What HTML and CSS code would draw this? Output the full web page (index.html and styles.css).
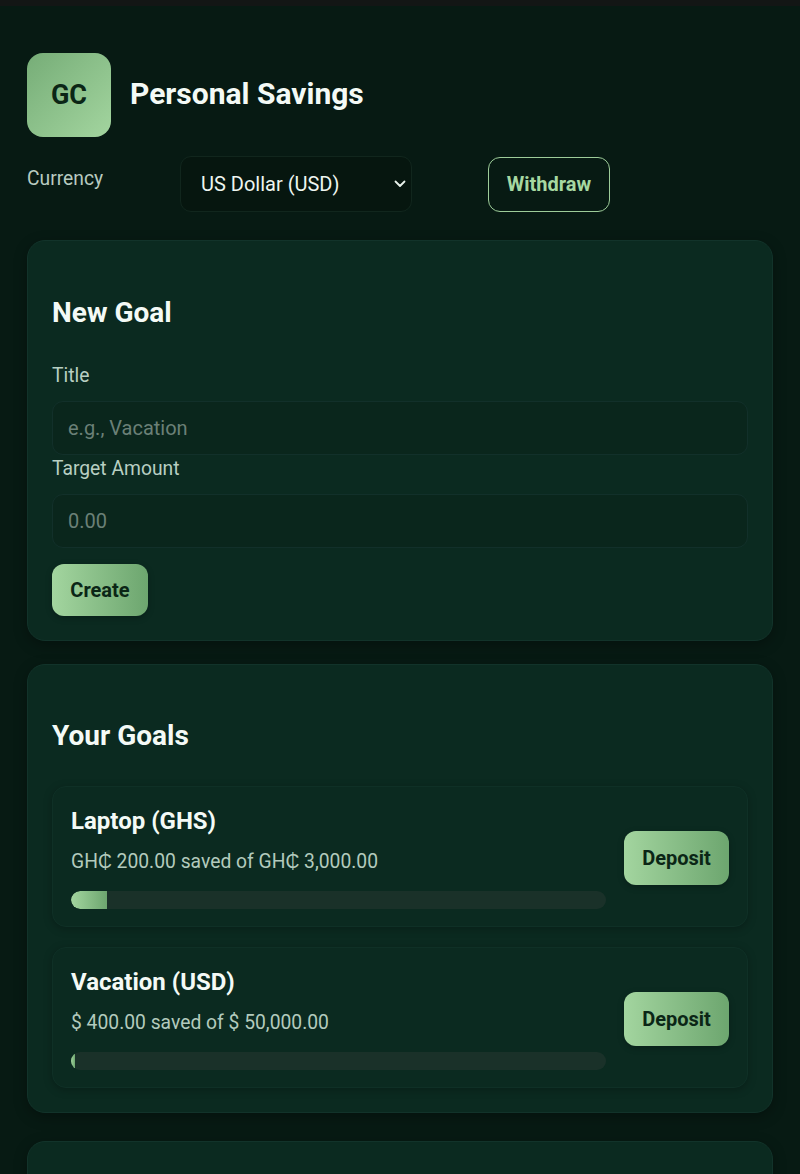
FILE: index.html
```html
<!DOCTYPE html>
<html lang="en">
<head>
  <meta charset="UTF-8" />
  <meta name="viewport" content="width=device-width, initial-scale=1.0" />
  <title>Personal Savings</title>
  <link rel="stylesheet" href="styles.css">
</head>
<body>
  <div class="topbar"></div>
  <main class="page">
    <header class="header">
      <div class="logo">GC</div>
      <h1>Personal Savings</h1>
    </header>

    <div class="controls">
      <label class="currency-label" for="currency">Currency</label>
      <div class="select-wrap">
        <select id="currency">
          <option>US Dollar (USD)</option>
          <option>Ghana Cedi (GHS)</option>
        </select>
        <svg class="chevron" width="12" height="8" viewBox="0 0 12 8"><path d="M1.5 1.5 6 6l4.5-4.5" fill="none" stroke="#e8f2ec" stroke-width="1.8" stroke-linecap="round" stroke-linejoin="round"/></svg>
      </div>
      <button class="btn-outline">Withdraw</button>
    </div>

    <section class="card">
      <h2>New Goal</h2>
      <label class="field-label" for="title">Title</label>
      <input id="title" type="text" placeholder="e.g., Vacation">
      <label class="field-label tight" for="amount">Target Amount</label>
      <input id="amount" type="text" placeholder="0.00">
      <button class="btn-primary create">Create</button>
    </section>

    <section class="card">
      <h2 class="goals-title">Your Goals</h2>
      <div class="goal-list">
        <div class="goal">
          <div class="goal-info">
            <div class="goal-name">Laptop (GHS)</div>
            <div class="goal-amount">GH₵ 200.00 saved of GH₵ 3,000.00</div>
            <div class="bar"><div class="bar-fill" style="width: 6.67%"></div></div>
          </div>
          <button class="btn-primary deposit">Deposit</button>
        </div>
        <div class="goal">
          <div class="goal-info">
            <div class="goal-name">Vacation (USD)</div>
            <div class="goal-amount">$ 400.00 saved of $ 50,000.00</div>
            <div class="bar"><div class="bar-fill" style="width: 0.8%"></div></div>
          </div>
          <button class="btn-primary deposit">Deposit</button>
        </div>
      </div>
    </section>

    <section class="card">
      <h2>Transactions</h2>
      <div class="goal-amount">No transactions yet.</div>
    </section>
  </main>
</body>
</html>
```

FILE: styles.css
```css
body {
  font-family: Roboto, "Liberation Sans", sans-serif;
  background-color: #071a13;
  color: #ffffff;
  margin: 0;
  padding: 0;
}

.topbar {
  height: 6px;
  background-color: #131615;
}

.page {
  padding: 47px 27px 40px;
}

.header {
  display: flex;
  align-items: center;
  gap: 19px;
}

.logo {
  width: 84px;
  height: 84px;
  border-radius: 16px;
  background: linear-gradient(135deg, #76ad77, #a3d59f);
  color: #0b2616;
  font-weight: 700;
  font-size: 27px;
  display: flex;
  align-items: center;
  justify-content: center;
}

h1 {
  font-size: 30px;
  font-weight: 700;
  margin: -3px 0 0;
  color: #f4faf6;
}

.controls {
  display: flex;
  align-items: center;
  gap: 76px;
  margin-top: 19px;
}

.currency-label {
  width: 77px;
  font-size: 19.3px;
  color: #b8cbc0;
  margin-top: -12px;
}

.select-wrap {
  position: relative;
}

select {
  appearance: none;
  -webkit-appearance: none;
  width: 232px;
  height: 56px;
  padding: 0 20px;
  border-radius: 11px;
  border: 1px solid #11261d;
  background-color: #06160f;
  color: #eef5f0;
  font-family: inherit;
  font-size: 20px;
}

.chevron {
  position: absolute;
  right: 6px;
  top: 24px;
  pointer-events: none;
}

button {
  font-family: inherit;
  cursor: pointer;
}

.btn-outline {
  width: 122px;
  height: 55px;
  border-radius: 12px;
  border: 1px solid #9dcc99;
  background: transparent;
  color: #a6d8a1;
  font-weight: 700;
  font-size: 20px;
}

.btn-primary {
  border: none;
  border-radius: 12px;
  background: linear-gradient(90deg, #a3d59f, #6da66f);
  color: #0b2616;
  font-weight: 700;
  font-size: 20px;
  box-shadow: 0 2px 6px rgba(0, 0, 0, 0.25);
}

.card {
  margin-top: 28px;
  padding: 24px;
  background-color: #0b2a20;
  border: 1px solid #12332a;
  border-radius: 18px;
  box-shadow: 0 4px 14px rgba(0, 0, 0, 0.3);
}

.card + .card {
  margin-top: 23px;
}

.card:last-child {
  margin-top: 28px;
}

h2 {
  font-size: 28px;
  font-weight: 700;
  margin: 31px 0 35px;
  color: #f4faf6;
}

.goals-title {
  margin: 30px 0 34px;
}

.field-label {
  display: block;
  font-size: 19.3px;
  color: #b8cfc2;
  margin-bottom: 14px;
}

.field-label.tight {
  margin-top: 2px;
}

input {
  display: block;
  box-sizing: border-box;
  width: 100%;
  height: 54px;
  padding: 0 15px;
  border-radius: 11px;
  border: 1px solid #12302a;
  background-color: #0a261c;
  color: #eef5f0;
  font-family: inherit;
  font-size: 20px;
}

input::placeholder {
  color: #6b8077;
}

.create {
  margin-top: 16px;
  width: 96px;
  height: 52px;
}

.goal-list {
  display: flex;
  flex-direction: column;
  gap: 20px;
}

.goal {
  display: flex;
  align-items: center;
  gap: 18px;
  padding: 20px 18px 17px;
  background-color: #0b2a20;
  border: 1px solid #0f3026;
  border-radius: 14px;
  box-shadow: 0 2px 8px rgba(0, 0, 0, 0.25);
}

.goal-info {
  flex: 1;
}

.goal-name {
  font-size: 24px;
  font-weight: 700;
  color: #f4faf6;
}

.goal-amount {
  font-size: 19.3px;
  color: #b3cabd;
  margin-top: 15px;
}

.bar {
  margin-top: 18px;
  height: 18px;
  border-radius: 9px;
  background-color: #1a3129;
  overflow: hidden;
}

.bar-fill {
  height: 100%;
  border-radius: 9px 0 0 9px;
  background: linear-gradient(90deg, #a3d59f, #6da66f);
}

.deposit {
  width: 105px;
  height: 54px;
}
```
